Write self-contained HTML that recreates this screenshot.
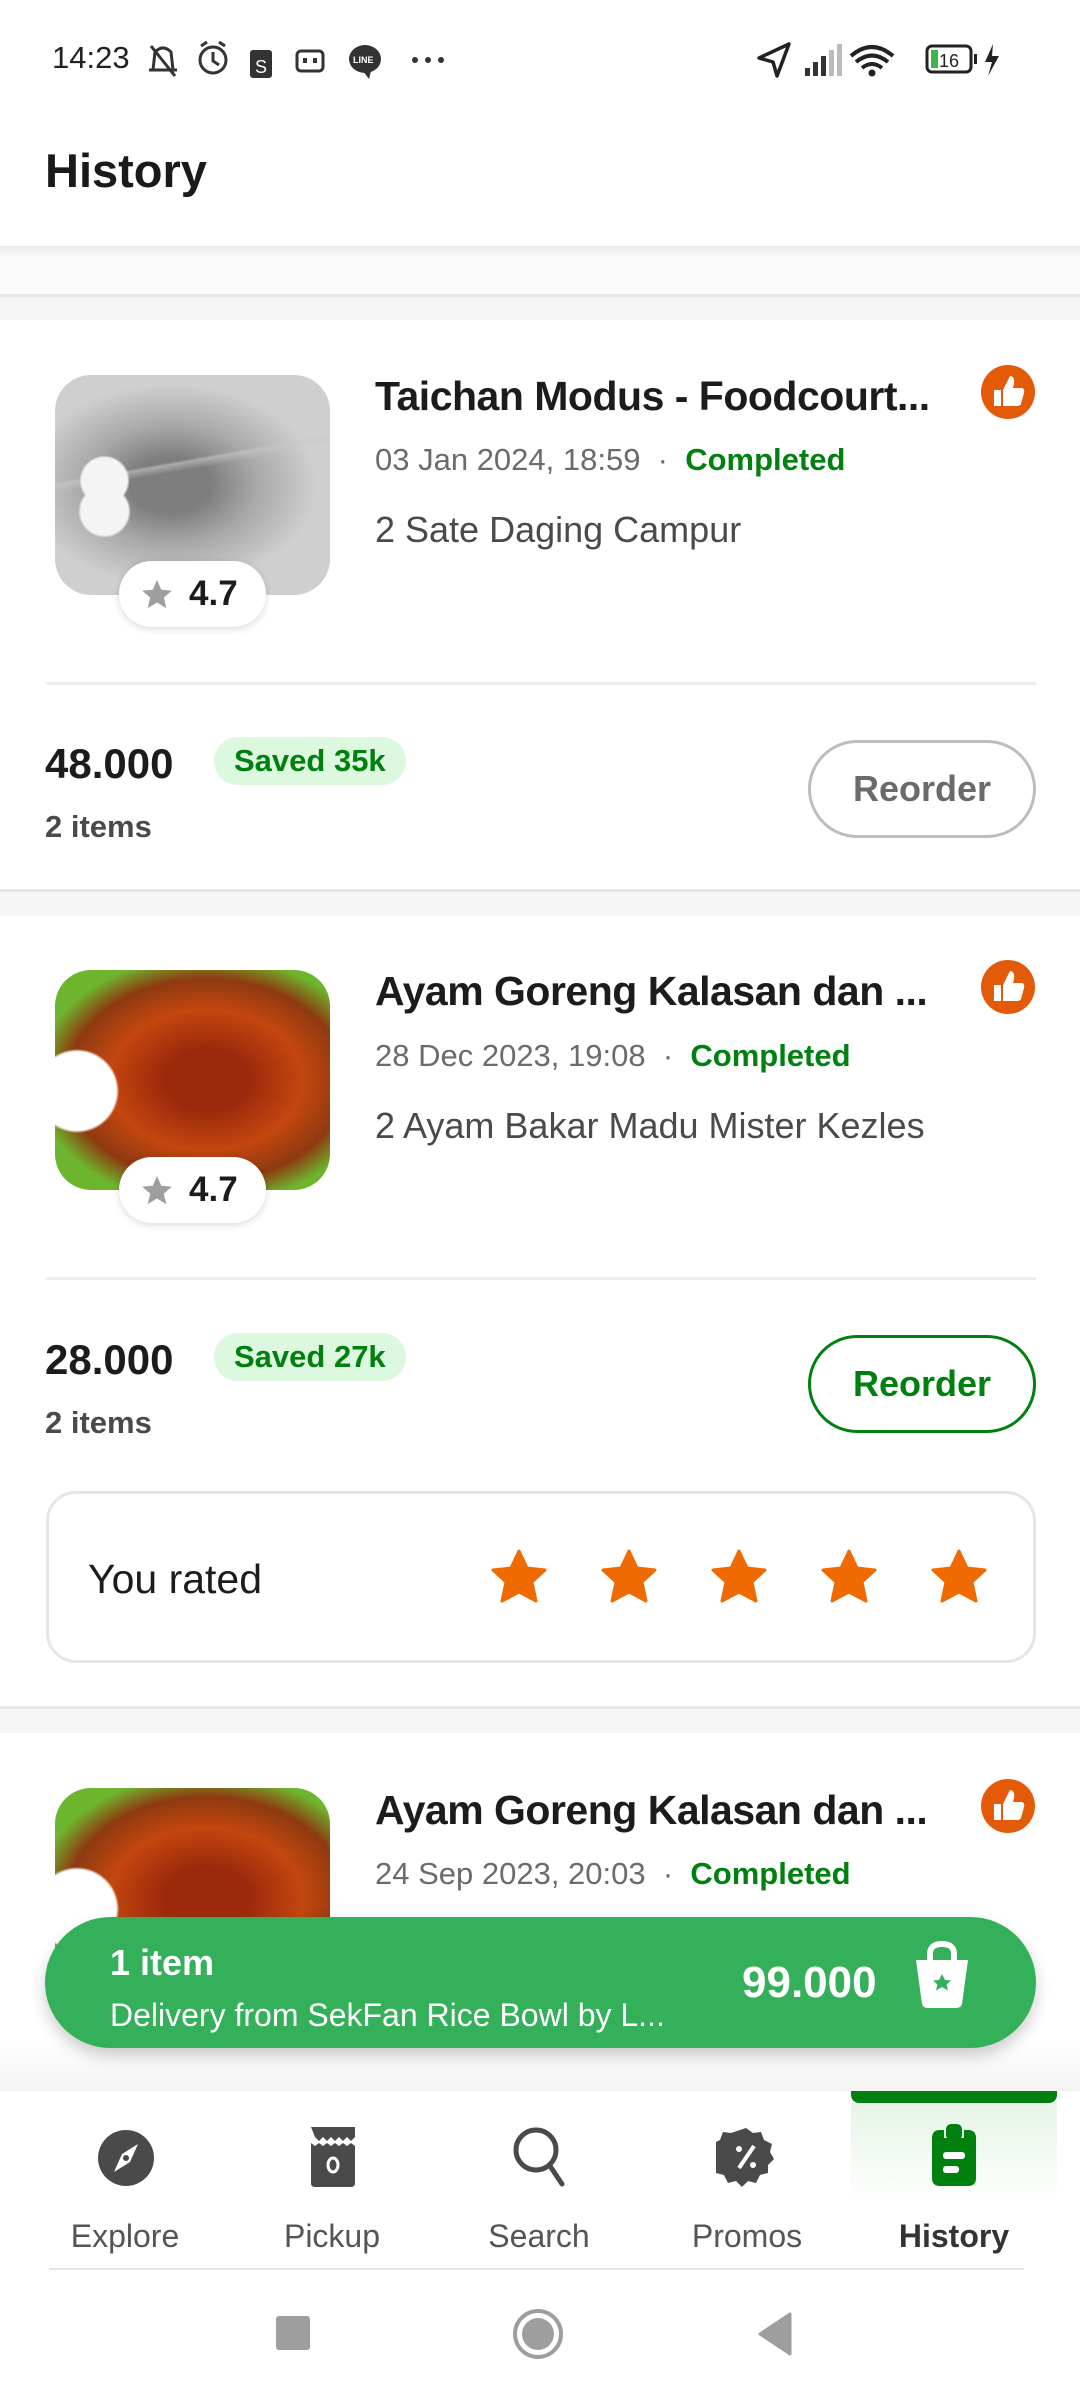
<!DOCTYPE html>
<html><head><meta charset="utf-8"><style>
*{margin:0;padding:0;box-sizing:border-box}
body{width:1080px;height:2400px;position:relative;background:#fff;font-family:"Liberation Sans",sans-serif;color:#1c1c1c;overflow:hidden}
.a{position:absolute}
.t{white-space:nowrap}
.title{font-size:41px;font-weight:bold;color:#1c1c1c;letter-spacing:-0.5px}
.date{font-size:31px;color:#6b6b6b}
.comp{font-size:31px;color:#00800f;font-weight:bold}
.item{font-size:36px;color:#4a4a4a}
.price{font-size:42px;font-weight:bold}
.saved{background:#dcf8df;color:#00800f;font-size:31px;font-weight:bold;border-radius:26px;padding:0 20px;height:48px;line-height:48px}
.items{font-size:31px;color:#4a4a4a;font-weight:bold}
.btn{border-radius:50px;font-size:36px;font-weight:bold;text-align:center;line-height:92px}
.img{border-radius:36px;overflow:hidden}
.pill{background:#fff;border-radius:34px;box-shadow:0 2px 8px rgba(0,0,0,.15);width:147px;height:66px;font-size:35px;font-weight:bold;line-height:66px;padding-left:70px}
.div{height:3px;background:#ececec}
.gray{background:#f5f5f5}
.nl{font-size:32px;color:#555;text-align:center;width:200px}
</style></head><body>
<!-- status bar -->
<div class="a t" style="left:52px;top:40px;font-size:31px;color:#222">14:23</div>
<svg class="a" style="left:145px;top:38px" width="310" height="46" viewBox="0 0 310 46">
<g fill="none" stroke="#333" stroke-width="3"><path d="M8 32 L10 14 Q18 6 26 14 L28 32 Z M4 32h28 M6 8 L30 38"/><circle cx="68" cy="22" r="13"/><path d="M68 14v9l6 4 M56 8l6-4 M80 8l-6-4"/></g>
<rect x="105" y="12" width="22" height="28" rx="3" fill="#333"/><text x="110" y="35" font-size="18" fill="#fff" font-family="Liberation Sans">S</text>
<rect x="152" y="13" width="26" height="20" rx="4" fill="none" stroke="#333" stroke-width="3"/><rect x="158" y="20" width="4" height="5" fill="#333"/><rect x="168" y="20" width="4" height="5" fill="#333"/>
<ellipse cx="220" cy="21" rx="16" ry="14" fill="#333"/><path d="M218 33 l6 8 l2 -8z" fill="#333"/><text x="208" y="25" font-size="9" fill="#fff" font-family="Liberation Sans" font-weight="bold">LINE</text>
<circle cx="270" cy="22" r="3" fill="#333"/><circle cx="283" cy="22" r="3" fill="#333"/><circle cx="296" cy="22" r="3" fill="#333"/></svg>
<svg class="a" style="left:755px;top:38px" width="270" height="46" viewBox="0 0 270 46">
<path d="M4 20 L34 6 L22 38 L18 24 Z" fill="none" stroke="#222" stroke-width="3.5" stroke-linejoin="round"/>
<rect x="50" y="30" width="5" height="8" fill="#333"/><rect x="58" y="24" width="5" height="14" fill="#333"/><rect x="66" y="18" width="5" height="20" fill="#333"/><rect x="74" y="12" width="5" height="26" fill="#bbb"/><rect x="82" y="6" width="5" height="32" fill="#bbb"/>
<path d="M96 18 Q117 0 138 18 M101 24 Q117 11 133 24 M107 30 Q117 22 127 30" fill="none" stroke="#222" stroke-width="4"/><circle cx="117" cy="35" r="3.5" fill="#222"/>
<rect x="172" y="8" width="44" height="26" rx="5" fill="none" stroke="#222" stroke-width="3"/><rect x="176" y="12" width="7" height="18" fill="#3ab54a"/><text x="184" y="29" font-size="18" fill="#222" font-family="Liberation Sans">16</text><rect x="219" y="16" width="3" height="10" fill="#222"/>
<path d="M238 6 L230 24 L237 24 L233 38 L244 18 L237 18 Z" fill="#222"/></svg>
<!-- header -->
<div class="a t" style="left:45px;top:143px;font-size:47px;font-weight:bold;color:#1a1a1a">History</div>
<div class="a" style="left:0;top:246px;width:1080px;height:74px;background:linear-gradient(#ebebeb,#fafafa 12px,#fafafa)"></div>
<div class="a" style="left:0;top:294px;width:1080px;height:3px;background:#e8e8e8"></div>
<div class="a gray" style="left:0;top:297px;width:1080px;height:23px"></div>

<!-- card 1 -->
<div class="a img" style="left:55px;top:375px;width:275px;height:220px;background:radial-gradient(circle at 18% 48%,#f4f4f4 9%,transparent 10%),radial-gradient(circle at 18% 62%,#f4f4f4 9%,transparent 10%),linear-gradient(170deg,transparent 40%,rgba(200,200,200,.6) 41%,transparent 44%),radial-gradient(ellipse at 42% 50%,#7e7e7e 18%,#a8a8a8 38%,#cfcfcf 65%),#ccc"></div>
<div class="a pill" style="left:119px;top:561px">4.7</div>
<svg class="a" style="left:139px;top:577px" width="36" height="34" viewBox="0 0 24 24"><path d="M12 2l3 7 7.5.6-5.7 5 1.8 7.4L12 18l-6.6 4 1.8-7.4-5.7-5L9 9z" fill="#9e9e9e"/></svg>
<div class="a t title" style="left:375px;top:373px;width:585px;overflow:hidden">Taichan Modus - Foodcourt...</div>
<svg class="a" style="left:980px;top:364px" width="56" height="56" viewBox="0 0 56 56"><circle cx="28" cy="28" r="27" fill="#e35a09"/><path d="M14 26h7v16h-7z M23 26 L30 12 Q35 12 34 20 L33 24 H42 Q45 25 44 29 L41 40 Q40 42 37 42 H23 Z" fill="#fff"/></svg>
<div class="a t date" style="left:375px;top:442px">03 Jan 2024, 18:59 &nbsp;·&nbsp; <span class="comp">Completed</span></div>
<div class="a t item" style="left:375px;top:509px">2 Sate Daging Campur</div>
<div class="a div" style="left:46px;top:682px;width:990px"></div>
<div class="a t price" style="left:45px;top:740px">48.000</div>
<div class="a t saved" style="left:214px;top:737px">Saved 35k</div>
<div class="a t items" style="left:45px;top:809px">2 items</div>
<div class="a btn" style="left:808px;top:740px;width:228px;height:98px;border:3px solid #bdbdbd;color:#6a6a6a">Reorder</div>
<div class="a" style="left:0;top:889px;width:1080px;height:3px;background:#e8e8e8"></div>
<div class="a gray" style="left:0;top:892px;width:1080px;height:24px"></div>

<!-- card 2 -->
<div class="a img" style="left:55px;top:970px;width:275px;height:220px;background:radial-gradient(circle at 8% 55%,#fff 14%,transparent 15%),radial-gradient(ellipse at 55% 50%,#9b2a0c 20%,#c4460f 45%,#8e3a10 65%,#6eb52e 80%),#7cbf38"></div>
<div class="a pill" style="left:119px;top:1157px">4.7</div>
<svg class="a" style="left:139px;top:1173px" width="36" height="34" viewBox="0 0 24 24"><path d="M12 2l3 7 7.5.6-5.7 5 1.8 7.4L12 18l-6.6 4 1.8-7.4-5.7-5L9 9z" fill="#9e9e9e"/></svg>
<div class="a t title" style="left:375px;top:968px">Ayam Goreng Kalasan dan ...</div>
<svg class="a" style="left:980px;top:959px" width="56" height="56" viewBox="0 0 56 56"><circle cx="28" cy="28" r="27" fill="#e35a09"/><path d="M14 26h7v16h-7z M23 26 L30 12 Q35 12 34 20 L33 24 H42 Q45 25 44 29 L41 40 Q40 42 37 42 H23 Z" fill="#fff"/></svg>
<div class="a t date" style="left:375px;top:1038px">28 Dec 2023, 19:08 &nbsp;·&nbsp; <span class="comp">Completed</span></div>
<div class="a t item" style="left:375px;top:1105px">2 Ayam Bakar Madu Mister Kezles</div>
<div class="a div" style="left:46px;top:1277px;width:990px"></div>
<div class="a t price" style="left:45px;top:1336px">28.000</div>
<div class="a t saved" style="left:214px;top:1333px">Saved 27k</div>
<div class="a t items" style="left:45px;top:1405px">2 items</div>
<div class="a btn" style="left:808px;top:1335px;width:228px;height:98px;border:3px solid #00800f;color:#00800f">Reorder</div>
<div class="a" style="left:46px;top:1491px;width:990px;height:172px;border:3px solid #e6e6e6;border-radius:30px"></div>
<div class="a t" style="left:88px;top:1556px;font-size:41px;color:#1c1c1c">You rated</div>
<svg class="a" style="left:490px;top:1548px" width="500" height="58" viewBox="0 0 500 58">
<g fill="#ef6a00" stroke="#ef6a00" stroke-width="3" stroke-linejoin="round">
<path id="s" d="M29 3l8 17 18 2-13 12 4 19-17-9-17 9 4-19-13-12 18-2z"/>
<use href="#s" x="110"/><use href="#s" x="220"/><use href="#s" x="330"/><use href="#s" x="440"/></g></svg>
<div class="a" style="left:0;top:1706px;width:1080px;height:3px;background:#e8e8e8"></div>
<div class="a gray" style="left:0;top:1709px;width:1080px;height:24px"></div>

<!-- card 3 -->
<div class="a img" style="left:55px;top:1788px;width:275px;height:220px;background:radial-gradient(circle at 8% 55%,#fff 14%,transparent 15%),radial-gradient(ellipse at 55% 50%,#9b2a0c 20%,#c4460f 45%,#8e3a10 65%,#6eb52e 80%),#7cbf38"></div>
<div class="a t title" style="left:375px;top:1787px">Ayam Goreng Kalasan dan ...</div>
<svg class="a" style="left:980px;top:1778px" width="56" height="56" viewBox="0 0 56 56"><circle cx="28" cy="28" r="27" fill="#e35a09"/><path d="M14 26h7v16h-7z M23 26 L30 12 Q35 12 34 20 L33 24 H42 Q45 25 44 29 L41 40 Q40 42 37 42 H23 Z" fill="#fff"/></svg>
<div class="a t date" style="left:375px;top:1856px">24 Sep 2023, 20:03 &nbsp;·&nbsp; <span class="comp">Completed</span></div>

<!-- bottom fade -->
<div class="a" style="left:0;top:2040px;width:1080px;height:51px;background:linear-gradient(#fff,#f3f3f3)"></div>
<!-- cart bar -->
<div class="a" style="left:45px;top:1917px;width:991px;height:131px;border-radius:66px;background:#34b05a;box-shadow:0 8px 16px rgba(0,0,0,.2)"></div>
<div class="a t" style="left:110px;top:1942px;font-size:36px;font-weight:bold;color:#fff">1 item</div>
<div class="a t" style="left:110px;top:1997px;font-size:32px;color:#fff">Delivery from SekFan Rice Bowl by L...</div>
<div class="a t" style="left:742px;top:1958px;font-size:44px;font-weight:bold;color:#fff">99.000</div>
<svg class="a" style="left:910px;top:1940px" width="64" height="72" viewBox="0 0 64 72"><path d="M20 22 V14 Q20 4 32 4 Q44 4 44 14 V22" fill="none" stroke="#fff" stroke-width="6"/><path d="M6 20 H58 L52 64 Q51 68 46 68 H18 Q13 68 12 64 Z" fill="#fff"/><path d="M32 34l3 6 6 .5-4.5 4 1.5 6-6-3.5-6 3.5 1.5-6-4.5-4 6-.5z" fill="#34b05a"/></svg>

<!-- nav -->
<div class="a" style="left:0;top:2091px;width:1080px;height:309px;background:#fff"></div>
<div class="a" style="left:851px;top:2091px;width:206px;height:12px;background:#00800f;border-radius:0 0 8px 8px"></div>
<div class="a" style="left:851px;top:2103px;width:206px;height:100px;background:linear-gradient(#e6f4e6,#fff)"></div>
<svg class="a" style="left:96px;top:2128px" width="60" height="60" viewBox="0 0 60 60"><circle cx="30" cy="30" r="28" fill="#4a4a4a"/><path d="M42 16 L34 34 L18 44 L26 26 Z" fill="#fff"/><circle cx="30" cy="30" r="3" fill="#4a4a4a"/></svg>
<svg class="a" style="left:305px;top:2125px" width="56" height="64" viewBox="0 0 56 64"><path d="M6 2h44v10l-4 4-4-4-4 4-4-4-4 4-4-4-4 4-4-4-4 4-4-4z" fill="#4a4a4a"/><path d="M6 18 l4 3 4-3 4 3 4-3 4 3 4-3 4 3 4-3 4 3 4-3 4 3 V58 Q50 62 46 62 H10 Q6 62 6 58 Z" fill="#4a4a4a"/><ellipse cx="28" cy="40" rx="5" ry="7" fill="none" stroke="#fff" stroke-width="3"/></svg>
<svg class="a" style="left:510px;top:2122px" width="60" height="70" viewBox="0 0 60 70"><circle cx="26" cy="28" r="20" fill="none" stroke="#4a4a4a" stroke-width="5"/><path d="M40 44 L52 62" stroke="#4a4a4a" stroke-width="5" stroke-linecap="round"/></svg>
<svg class="a" style="left:716px;top:2126px" width="60" height="62" viewBox="0 0 60 62"><path d="M30 2 l7 5 8-1 3 8 8 4-2 8 4 7-6 6 0 8-8 2-4 8-8-2-6 6-6-6-8 2-4-8-8-2 0-8-6-6 4-7-2-8 8-4 3-8 8 1z" fill="#4a4a4a"/><path d="M23 42 L38 20" stroke="#fff" stroke-width="4"/><circle cx="23" cy="23" r="3" fill="#fff"/><circle cx="37" cy="39" r="3" fill="#fff"/></svg>
<svg class="a" style="left:928px;top:2122px" width="52" height="68" viewBox="0 0 52 68"><path d="M4 16 Q4 8 12 8 H16 V16 H36 V8 H40 Q48 8 48 16 V56 Q48 64 40 64 H12 Q4 64 4 56 Z" fill="#00800f"/><rect x="18" y="2" width="16" height="16" rx="5" fill="#00800f"/><rect x="15" y="30" width="22" height="7" rx="3" fill="#fff"/><rect x="15" y="44" width="16" height="7" rx="3" fill="#fff"/></svg>
<div class="a t nl" style="left:25px;top:2218px">Explore</div>
<div class="a t nl" style="left:232px;top:2218px">Pickup</div>
<div class="a t nl" style="left:439px;top:2218px">Search</div>
<div class="a t nl" style="left:647px;top:2218px">Promos</div>
<div class="a t nl" style="left:854px;top:2218px;font-weight:bold;color:#333">History</div>
<div class="a" style="left:49px;top:2268px;width:975px;height:2px;background:#e4e4e4"></div>
<div class="a" style="left:276px;top:2316px;width:34px;height:34px;background:#9e9e9e;border-radius:3px"></div>
<div class="a" style="left:513px;top:2309px;width:50px;height:50px;border:4px solid #9e9e9e;border-radius:50%"></div>
<div class="a" style="left:522px;top:2318px;width:32px;height:32px;background:#9e9e9e;border-radius:50%"></div>
<svg class="a" style="left:758px;top:2312px" width="36" height="44" viewBox="0 0 36 44"><path d="M32 2 V42 L2 22 Z" fill="#9e9e9e" stroke="#9e9e9e" stroke-width="3" stroke-linejoin="round"/></svg>
</body></html>
